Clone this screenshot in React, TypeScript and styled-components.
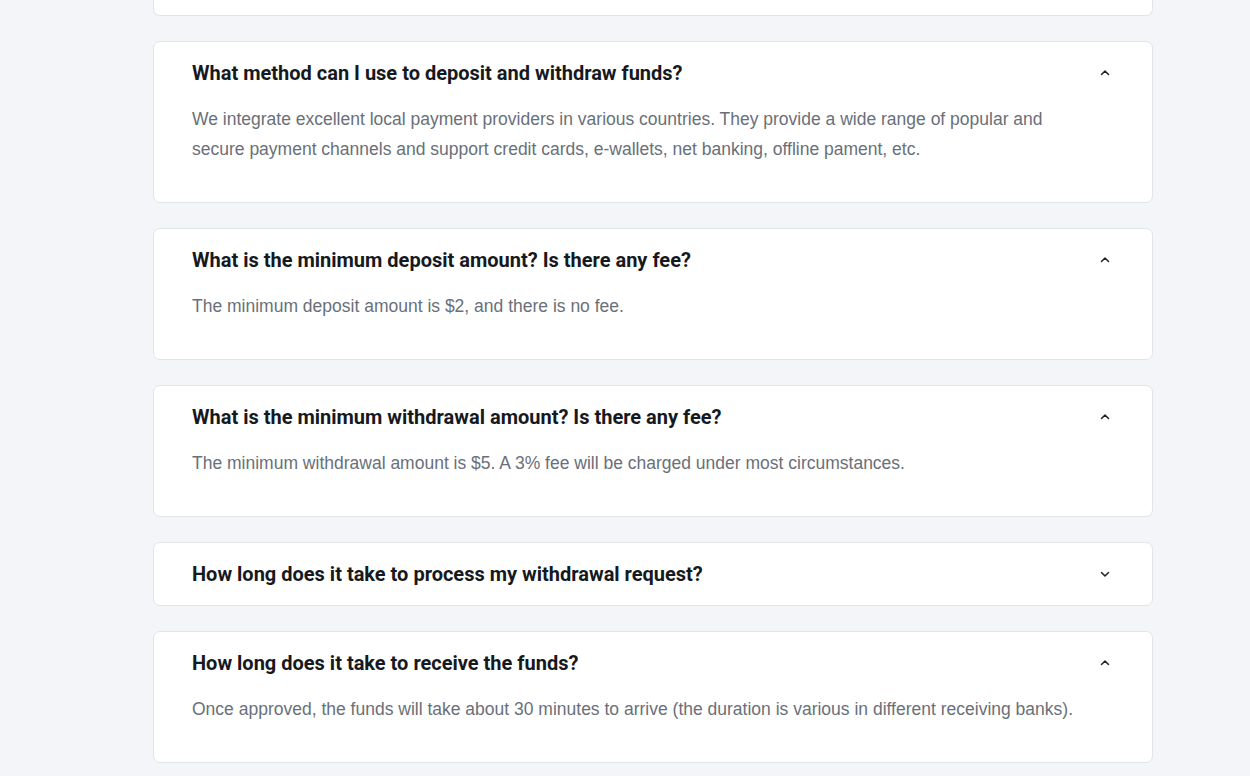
import React from "react";
import styled, { createGlobalStyle } from "styled-components";

const Global = createGlobalStyle`
  html, body { margin: 0; padding: 0; background: #f4f5f9; }
  body { font-family: "Liberation Sans", Arial, sans-serif; }
`;

const Page = styled.div`
  width: 1250px;
  height: 776px;
  overflow: hidden;
  background: #f4f5f9;
`;

const List = styled.div`
  display: flex;
  flex-direction: column;
  gap: 25px;
  width: 1000px;
  margin: 0 0 0 153px;
`;

const Card = styled.div`
  background: #ffffff;
  border: 1px solid #e1e4e9;
  border-radius: 7px;
  box-sizing: border-box;
`;

const CardTail = styled(Card)`
  height: 16px;
  border-top: none;
  border-top-left-radius: 0;
  border-top-right-radius: 0;
`;

const Header = styled.div`
  display: flex;
  align-items: center;
  justify-content: space-between;
  padding: 19px 40px 19px 38px;
`;

const Title = styled.h3`
  margin: 0;
  font-family: Roboto, "Noto Sans", sans-serif;
  font-weight: 700;
  font-size: 20px;
  line-height: 24px;
  color: #16191d;
`;

const Chevron = styled.svg`
  width: 14px;
  height: 14px;
  flex: none;
`;

const Body = styled.p`
  margin: 0;
  padding: 0 62px 38px 38px;
  font-family: "Liberation Sans", Arial, sans-serif;
  font-size: 17.5px;
  line-height: 30px;
  color: #697079;
`;

const faqs = [
  {
    q: "What method can I use to deposit and withdraw funds?",
    a: "We integrate excellent local payment providers in various countries. They provide a wide range of popular and secure payment channels and support credit cards, e-wallets, net banking, offline pament, etc.",
    open: true,
  },
  {
    q: "What is the minimum deposit amount? Is there any fee?",
    a: "The minimum deposit amount is $2, and there is no fee.",
    open: true,
  },
  {
    q: "What is the minimum withdrawal amount? Is there any fee?",
    a: "The minimum withdrawal amount is $5. A 3% fee will be charged under most circumstances.",
    open: true,
  },
  { q: "How long does it take to process my withdrawal request?", a: "", open: false },
  {
    q: "How long does it take to receive the funds?",
    a: "Once approved, the funds will take about 30 minutes to arrive (the duration is various in different receiving banks).",
    open: true,
  },
];

const Icon = ({ up }: { up: boolean }) => (
  <Chevron viewBox="0 0 14 14" fill="none">
    <path
      d={up ? "M3.5 8.5 L7 5 L10.5 8.5" : "M3.5 5.5 L7 9 L10.5 5.5"}
      stroke="#1f2328"
      strokeWidth="1.5"
      strokeLinecap="round"
      strokeLinejoin="round"
    />
  </Chevron>
);

export default function App() {
  return (
    <Page>
      <Global />
      <List>
        <CardTail />
        {faqs.map((f, i) => (
          <Card key={i}>
            <Header>
              <Title>{f.q}</Title>
              <Icon up={f.open} />
            </Header>
            {f.open && <Body>{f.a}</Body>}
          </Card>
        ))}
      </List>
    </Page>
  );
}
